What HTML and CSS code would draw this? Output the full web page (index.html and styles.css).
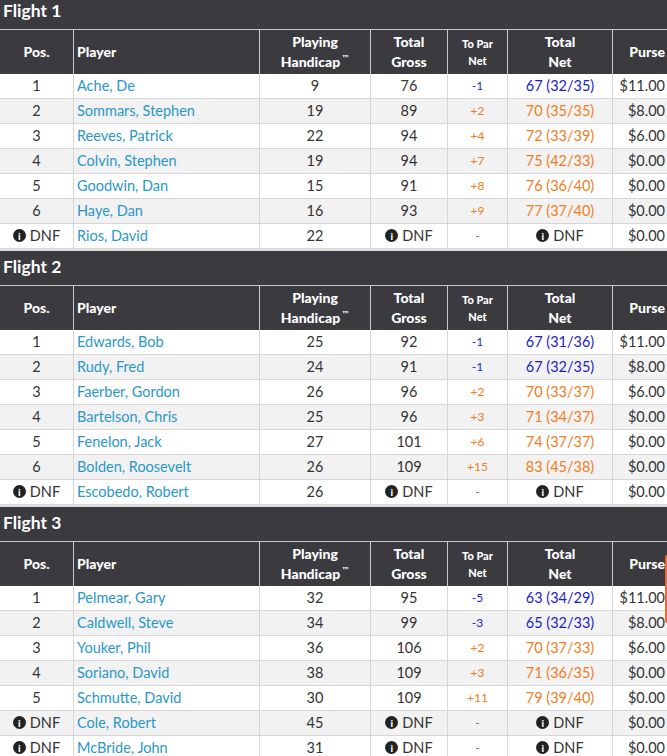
FILE: index.html
```html
<!DOCTYPE html>
<html>
<head>
<meta charset="utf-8">
<link rel="stylesheet" href="styles.css">
</head>
<body>
<div class="page">

<section class="flight">
  <div class="flight-title">Flight 1</div>
  <div class="row head">
    <div class="c pos">Pos.</div><div class="c player">Player</div><div class="c"><span class="hl">Playing<br>Handicap<sup>™</sup></span></div><div class="c"><span class="hl">Total<br>Gross</span></div><div class="c topar-h"><span class="hl">To Par<br>Net</span></div><div class="c"><span class="hl">Total<br>Net</span></div><div class="c purse">Purse</div>
  </div>
  <div class="row"><div class="c pos">1</div><div class="c player"><a>Ache, De</a></div><div class="c">9</div><div class="c">76</div><div class="c topar under">-1</div><div class="c under">67 (32/35)</div><div class="c purse">$11.00</div></div>
  <div class="row alt"><div class="c pos">2</div><div class="c player"><a>Sommars, Stephen</a></div><div class="c">19</div><div class="c">89</div><div class="c topar over">+2</div><div class="c over">70 (35/35)</div><div class="c purse">$8.00</div></div>
  <div class="row"><div class="c pos">3</div><div class="c player"><a>Reeves, Patrick</a></div><div class="c">22</div><div class="c">94</div><div class="c topar over">+4</div><div class="c over">72 (33/39)</div><div class="c purse">$6.00</div></div>
  <div class="row alt"><div class="c pos">4</div><div class="c player"><a>Colvin, Stephen</a></div><div class="c">19</div><div class="c">94</div><div class="c topar over">+7</div><div class="c over">75 (42/33)</div><div class="c purse">$0.00</div></div>
  <div class="row"><div class="c pos">5</div><div class="c player"><a>Goodwin, Dan</a></div><div class="c">15</div><div class="c">91</div><div class="c topar over">+8</div><div class="c over">76 (36/40)</div><div class="c purse">$0.00</div></div>
  <div class="row alt"><div class="c pos">6</div><div class="c player"><a>Haye, Dan</a></div><div class="c">16</div><div class="c">93</div><div class="c topar over">+9</div><div class="c over">77 (37/40)</div><div class="c purse">$0.00</div></div>
  <div class="row last"><div class="c pos"><span class="info">i</span>DNF</div><div class="c player"><a>Rios, David</a></div><div class="c">22</div><div class="c"><span class="info">i</span>DNF</div><div class="c topar dash">-</div><div class="c"><span class="info">i</span>DNF</div><div class="c purse">$0.00</div></div>
</section>

<section class="flight">
  <div class="flight-title">Flight 2</div>
  <div class="row head">
    <div class="c pos">Pos.</div><div class="c player">Player</div><div class="c"><span class="hl">Playing<br>Handicap<sup>™</sup></span></div><div class="c"><span class="hl">Total<br>Gross</span></div><div class="c topar-h"><span class="hl">To Par<br>Net</span></div><div class="c"><span class="hl">Total<br>Net</span></div><div class="c purse">Purse</div>
  </div>
  <div class="row"><div class="c pos">1</div><div class="c player"><a>Edwards, Bob</a></div><div class="c">25</div><div class="c">92</div><div class="c topar under">-1</div><div class="c under">67 (31/36)</div><div class="c purse">$11.00</div></div>
  <div class="row alt"><div class="c pos">2</div><div class="c player"><a>Rudy, Fred</a></div><div class="c">24</div><div class="c">91</div><div class="c topar under">-1</div><div class="c under">67 (32/35)</div><div class="c purse">$8.00</div></div>
  <div class="row"><div class="c pos">3</div><div class="c player"><a>Faerber, Gordon</a></div><div class="c">26</div><div class="c">96</div><div class="c topar over">+2</div><div class="c over">70 (33/37)</div><div class="c purse">$6.00</div></div>
  <div class="row alt"><div class="c pos">4</div><div class="c player"><a>Bartelson, Chris</a></div><div class="c">25</div><div class="c">96</div><div class="c topar over">+3</div><div class="c over">71 (34/37)</div><div class="c purse">$0.00</div></div>
  <div class="row"><div class="c pos">5</div><div class="c player"><a>Fenelon, Jack</a></div><div class="c">27</div><div class="c">101</div><div class="c topar over">+6</div><div class="c over">74 (37/37)</div><div class="c purse">$0.00</div></div>
  <div class="row alt"><div class="c pos">6</div><div class="c player"><a>Bolden, Roosevelt</a></div><div class="c">26</div><div class="c">109</div><div class="c topar over">+15</div><div class="c over">83 (45/38)</div><div class="c purse">$0.00</div></div>
  <div class="row last"><div class="c pos"><span class="info">i</span>DNF</div><div class="c player"><a>Escobedo, Robert</a></div><div class="c">26</div><div class="c"><span class="info">i</span>DNF</div><div class="c topar dash">-</div><div class="c"><span class="info">i</span>DNF</div><div class="c purse">$0.00</div></div>
</section>

<section class="flight">
  <div class="flight-title">Flight 3</div>
  <div class="row head">
    <div class="c pos">Pos.</div><div class="c player">Player</div><div class="c"><span class="hl">Playing<br>Handicap<sup>™</sup></span></div><div class="c"><span class="hl">Total<br>Gross</span></div><div class="c topar-h"><span class="hl">To Par<br>Net</span></div><div class="c"><span class="hl">Total<br>Net</span></div><div class="c purse">Purse</div>
  </div>
  <div class="row"><div class="c pos">1</div><div class="c player"><a>Pelmear, Gary</a></div><div class="c">32</div><div class="c">95</div><div class="c topar under">-5</div><div class="c under">63 (34/29)</div><div class="c purse">$11.00</div></div>
  <div class="row alt"><div class="c pos">2</div><div class="c player"><a>Caldwell, Steve</a></div><div class="c">34</div><div class="c">99</div><div class="c topar under">-3</div><div class="c under">65 (32/33)</div><div class="c purse">$8.00</div></div>
  <div class="row"><div class="c pos">3</div><div class="c player"><a>Youker, Phil</a></div><div class="c">36</div><div class="c">106</div><div class="c topar over">+2</div><div class="c over">70 (37/33)</div><div class="c purse">$6.00</div></div>
  <div class="row alt"><div class="c pos">4</div><div class="c player"><a>Soriano, David</a></div><div class="c">38</div><div class="c">109</div><div class="c topar over">+3</div><div class="c over">71 (36/35)</div><div class="c purse">$0.00</div></div>
  <div class="row"><div class="c pos">5</div><div class="c player"><a>Schmutte, David</a></div><div class="c">30</div><div class="c">109</div><div class="c topar over">+11</div><div class="c over">79 (39/40)</div><div class="c purse">$0.00</div></div>
  <div class="row alt"><div class="c pos"><span class="info">i</span>DNF</div><div class="c player"><a>Cole, Robert</a></div><div class="c">45</div><div class="c"><span class="info">i</span>DNF</div><div class="c topar dash">-</div><div class="c"><span class="info">i</span>DNF</div><div class="c purse">$0.00</div></div>
  <div class="row last"><div class="c pos"><span class="info">i</span>DNF</div><div class="c player"><a>McBride, John</a></div><div class="c">31</div><div class="c"><span class="info">i</span>DNF</div><div class="c topar dash">-</div><div class="c"><span class="info">i</span>DNF</div><div class="c purse">$0.00</div></div>
</section>

</div>
<div class="side-tab"></div>
</body>
</html>
```

FILE: styles.css
```css
html, body {
  margin: 0;
  padding: 0;
  background: #ffffff;
  overflow: hidden;
}
body {
  font-family: "Lato", "Open Sans", sans-serif;
  font-size: 14.5px;
  color: #333333;
}
.page {
  width: 667px;
  margin-top: -5px;
}
.flight-title {
  box-sizing: border-box;
  height: 34px;
  background: #3b3a3f;
  color: #ffffff;
  font-weight: 700;
  font-size: 17.5px;
  display: flex;
  align-items: center;
  padding-left: 3px;
  padding-bottom: 3px;
}
.row {
  display: grid;
  grid-template-columns: 74px 186px 111px 77px 60px 105px 54px;
  height: 25px;
  background: #ffffff;
}
.row.alt {
  background: #f2f2f2;
}
.c {
  box-sizing: border-box;
  border-right: 1px solid #d6d6d6;
  border-bottom: 1px solid #d6d6d6;
  display: flex;
  align-items: center;
  justify-content: center;
  text-align: center;
  white-space: nowrap;
  overflow: hidden;
  padding-bottom: 1px;
}
.c:last-child {
  border-right: none;
}
.c.player {
  justify-content: flex-start;
  padding-left: 3px;
  text-align: left;
}
.c.purse {
  justify-content: flex-end;
  padding-right: 2px;
  text-align: right;
}
.c.player a {
  color: #2a97c8;
  text-decoration: none;
}
.row.last .c {
  border-bottom: 3px solid #dcdcdc;
}
.row.last {
  height: 27px;
}
.row.head {
  height: 45px;
  background: #3b3a3f;
  border-top: 1px solid #c9c9cc;
  box-sizing: border-box;
}
.row.head .c {
  color: #ffffff;
  font-weight: 900;
  font-size: 14px;
  border-bottom: none;
  border-right-color: #c9c9cc;
}
.hl {
  display: block;
  line-height: 20px;
}
.row.head .c.topar-h .hl {
  font-size: 11px;
  line-height: 17px;
}
.row.head sup {
  font-family: "DejaVu Sans", sans-serif;
  font-size: 8px;
  font-weight: 700;
  vertical-align: 6px;
  line-height: 0;
  margin-left: 1px;
}
.topar {
  font-size: 12px;
}
.under {
  color: #1c1cc8;
}
.over {
  color: #f07d22;
}
.dash {
  color: #666666;
}
.info {
  display: inline-flex;
  align-items: center;
  justify-content: center;
  width: 13px;
  height: 13px;
  border-radius: 50%;
  background: #222222;
  color: #ffffff;
  font-size: 10px;
  font-weight: 900;
  line-height: 1;
  margin-right: 4px;
}
.side-tab {
  position: fixed;
  right: 0;
  top: 555px;
  width: 2px;
  height: 68px;
  background: #e86a34;
  border-radius: 3px 0 0 3px;
}
```
